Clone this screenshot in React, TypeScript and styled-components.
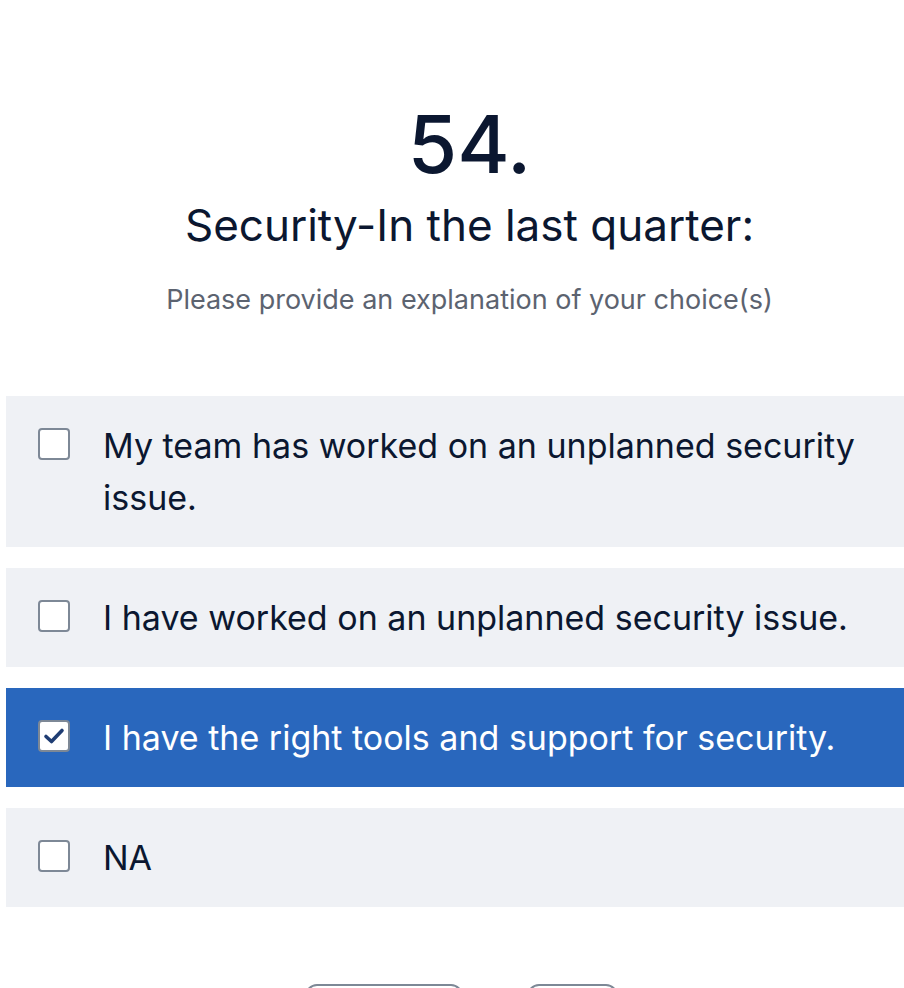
import React, { useState } from "react";
import styled, { createGlobalStyle } from "styled-components";

const Global = createGlobalStyle`
  html, body { margin: 0; padding: 0; background: #ffffff; overflow-x: hidden; }
  body { font-family: Inter, "Noto Sans", sans-serif; color: #0b1730; }
`;

const Page = styled.div`
  width: 927px;
  margin-left: 6px;
  padding-top: 96px;
  display: flex;
  flex-direction: column;
  align-items: center;
`;

const Number = styled.div`
  font-size: 80px;
  font-weight: 500;
  line-height: 96px;
  color: #0b1730;
`;

const Title = styled.h1`
  margin: 5px 0 0;
  font-size: 44px;
  font-weight: 400;
  line-height: 56px;
  color: #0b1730;
`;

const Subtitle = styled.p`
  margin: 29px 0 0;
  font-size: 27px;
  line-height: 36px;
  color: #5c6370;
`;

const Options = styled.div`
  margin-top: 78px;
  width: 100%;
  display: flex;
  flex-direction: column;
  gap: 21px;
`;

const Option = styled.label<{ $checked: boolean }>`
  display: flex;
  align-items: flex-start;
  gap: 33px;
  padding: 24px 32px 23px;
  background: ${(p) => (p.$checked ? "#2967bd" : "#eff1f5")};
  color: ${(p) => (p.$checked ? "#ffffff" : "#0b1730")};
  cursor: pointer;
`;

const Box = styled.span`
  flex: none;
  width: 32px;
  height: 32px;
  margin-top: 8px;
  box-sizing: border-box;
  border: 2px solid #7d8896;
  border-radius: 4px;
  background: #ffffff;
  display: flex;
  align-items: center;
  justify-content: center;
`;

const Text = styled.span`
  font-size: 34px;
  line-height: 52px;
  padding-right: 40px;
`;

const Buttons = styled.div`
  margin-top: 77px;
  display: flex;
  gap: 64px;
  margin-left: -16px;
`;

const Btn = styled.button<{ $w: number }>`
  width: ${(p) => p.$w}px;
  height: 64px;
  border: 2px solid #7d8896;
  border-radius: 12px;
  background: #ffffff;
  font-family: Inter, sans-serif;
  font-size: 24px;
  color: #0b1730;
`;

const items = [
  "My team has worked on an unplanned security issue.",
  "I have worked on an unplanned security issue.",
  "I have the right tools and support for security.",
  "NA",
];

export default function App() {
  const [sel, setSel] = useState<boolean[]>([false, false, true, false]);
  return (
    <>
      <Global />
      <Page>
        <Number>54.</Number>
        <Title>Security-In the last quarter:</Title>
        <Subtitle>Please provide an explanation of your choice(s)</Subtitle>
        <Options>
          {items.map((t, i) => (
            <Option
              key={t}
              $checked={sel[i]}
              onClick={() => setSel(sel.map((v, j) => (j === i ? !v : v)))}
            >
              <Box>
                {sel[i] && (
                  <svg width="22" height="18" viewBox="0 0 22 18">
                    <path d="M3 9.5 L8.5 14.5 L19 3.5" fill="none" stroke="#1f3d73" strokeWidth="3.6" strokeLinecap="round" strokeLinejoin="round" />
                  </svg>
                )}
              </Box>
              <Text>{t}</Text>
            </Option>
          ))}
        </Options>
        <Buttons>
          <Btn $w={158}>Previous</Btn>
          <Btn $w={91}>Next</Btn>
        </Buttons>
      </Page>
    </>
  );
}
